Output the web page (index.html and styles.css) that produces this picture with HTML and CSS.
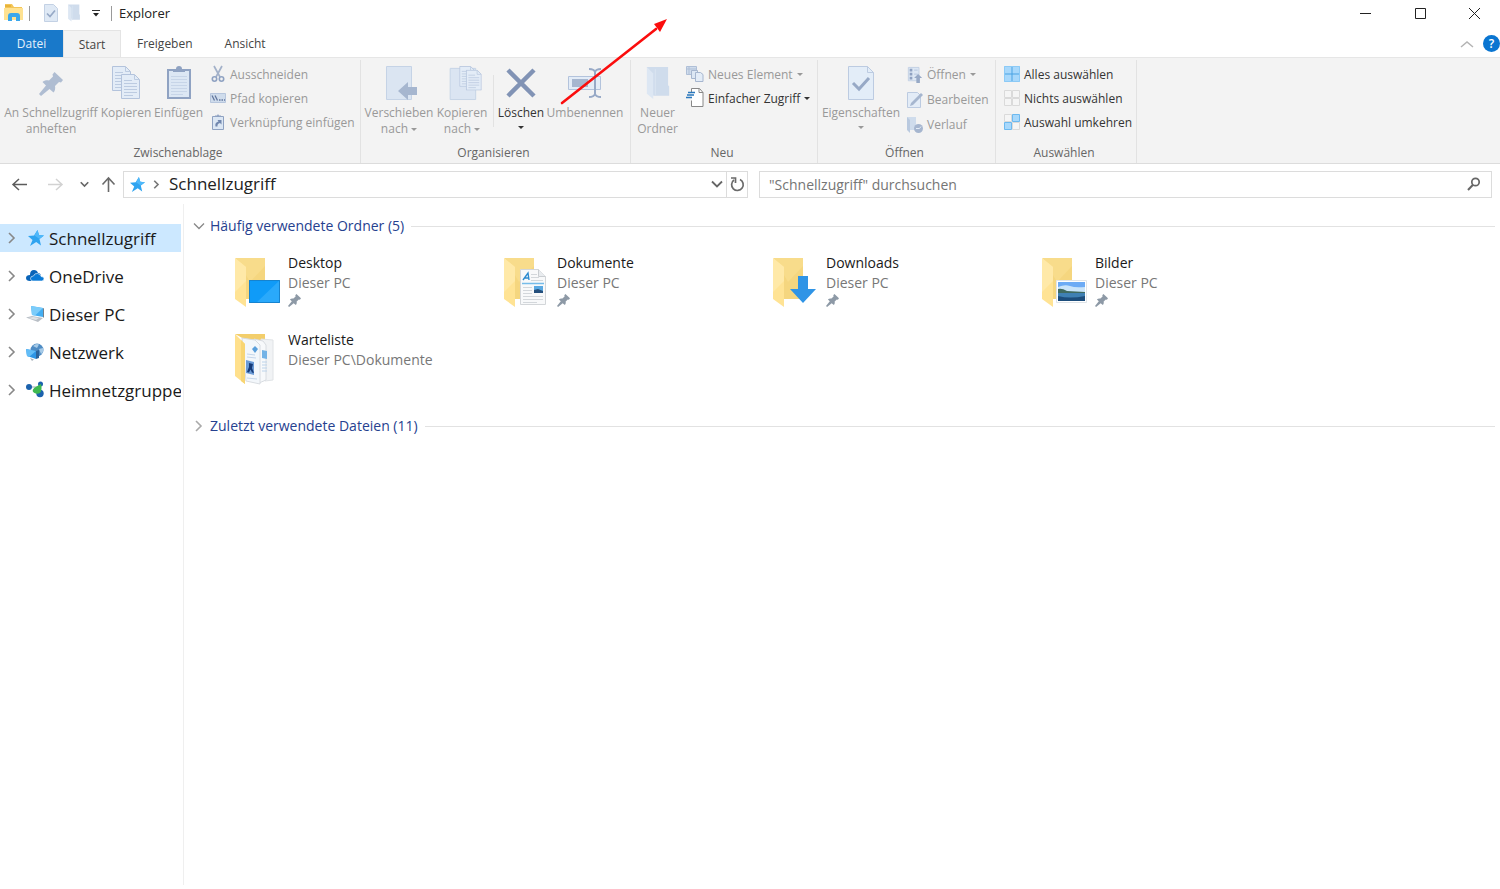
FILE: index.html
```html
<!DOCTYPE html>
<html lang="de">
<head>
<meta charset="utf-8">
<title>Explorer</title>
<link rel="stylesheet" href="styles.css">
</head>
<body>
<svg class="defs" aria-hidden="true">
  <symbol id="pin" viewBox="0 0 24 24"><path d="M15.500 0 24 8l-2 2.500-2-.5-4 4c.5 2.500 0 5-1.500 6.500L10.500 17 2 24l-2-2 7-8.500L3.500 10c1.500-1.500 4-2 6.500-1.500l4-4-.5-2z"/></symbol>
  <symbol id="chev" viewBox="0 0 12 12"><path d="M3 1l5 5-5 5" fill="none" stroke="currentColor" stroke-width="1.600"/></symbol>
  <symbol id="down" viewBox="0 0 12 12"><path d="M1 3.500l5 5 5-5" fill="none" stroke="currentColor" stroke-width="1.300"/></symbol>
  <symbol id="caret" viewBox="0 0 6 3"><path d="M0 0h6L3 3z" fill="currentColor"/></symbol>
  <symbol id="page" viewBox="0 0 19 25"><path d="M.5.500h13l5 5v19H.5z" fill="#e3ecf7" stroke="#b3c3dc"/><path d="M13.500.500v5h5M3 9.500h13M3 12.500h13M3 15.500h13M3 18.500h13M3 6.500h8M3 21.500h9" fill="none" stroke="#bccbe1"/></symbol>
  <symbol id="star" viewBox="0 0 16 16"><path d="M9.500 0l1.500 5 5 .5-4.500 3.500 1.500 6.500-4.800-3.500L2 16l2.500-6L0 6l6-.5z" fill="#2fa4f0"/><path d="M9.500 0l1.500 5 5 .5-4.500 3.500-5-3.500z" fill="#4fb8fa"/></symbol>
  <symbol id="folder" viewBox="0 0 46 52">
    <path d="M2 2h29v41H12z" fill="#f5d67f"/><path d="M2 2h29v8L16 26z" fill="#f8dc8b"/>
    <path d="M1 2l11 9v40L1 43z" fill="#ffe394"/><path d="M1 2l11 9v14L1 36z" fill="#ffe9a8"/>
  </symbol>
  <symbol id="flatfolder" viewBox="0 0 23 32"><path d="M1 1h20v17l1 1v9H7z" fill="#cfdcec"/><path d="M1 1l6 6v24l-6-5z" fill="#dde7f3"/><path d="M9 3v24" stroke="#dae4f1"/></symbol>
</svg>

<header class="titlebar">
  <svg class="app" viewBox="0 0 20 18"><path d="M1 0h7l2 3h8v3H1z" fill="#f3c558"/><path d="M0 4h19v12H0z" fill="#ffe291"/><path d="M1 1h6v2H1z" fill="#e8b43a"/><path d="M4 17v-5q0-3 3-3h6q3 0 3 3v5h-4v-4H8v4z" fill="#3aa7ec"/></svg>
  <span class="sep"></span>
  <button class="quick check" aria-label="Eigenschaften"><svg viewBox="0 0 14 18"><path d="M.5.500h9l4 4v13H.5z" fill="#dfe9f5" stroke="#c3d1e4"/><path d="M3 9.500l3 3 5-6" fill="none" stroke="#97a9c6" stroke-width="1.700"/></svg></button>
  <button class="quick fold" aria-label="Neuer Ordner"><svg viewBox="0 0 23 32"><use href="#flatfolder"/></svg></button>
  <button class="quick more" aria-label="Anpassen"><svg viewBox="0 0 8 7"><path d="M0 .5h8" stroke="#333"/><path d="M1 3h6L4 6.500z" fill="#222"/></svg></button>
  <span class="sep"></span>
  <h1>Explorer</h1>
  <div class="winbtns">
    <button aria-label="Minimieren"><svg viewBox="0 0 13 13"><path d="M1 6.500h11" stroke="#222"/></svg></button>
    <button aria-label="Maximieren"><svg viewBox="0 0 13 13"><path d="M1.500 1.500h10v10h-10z" fill="none" stroke="#222"/></svg></button>
    <button aria-label="Schließen"><svg viewBox="0 0 13 13"><path d="M1 1l11 11M12 1L1 12" stroke="#222"/></svg></button>
  </div>
</header>

<nav class="tabs">
  <button class="tab file">Datei</button>
  <button class="tab active">Start</button>
  <button class="tab">Freigeben</button>
  <button class="tab">Ansicht</button>
  <div class="tabend">
    <button class="collapse" aria-label="Menüband minimieren"><svg viewBox="0 0 14 8"><path d="M1 7l6-5 6 5" fill="none" stroke="#b4b4b4" stroke-width="1.500"/></svg></button>
    <button class="help" aria-label="Hilfe">?</button>
  </div>
</nav>

<section class="ribbon">
  <div class="group clip">
    <div class="tools">
      <button class="big off wide"><svg class="i24" viewBox="0 0 24 24" fill="#afbdd2"><use href="#pin"/></svg><span>An Schnellzugriff anheften</span></button>
      <button class="big off"><svg class="i34" viewBox="0 0 34 34"><svg x="3" y="0" width="19" height="25"><use href="#page"/></svg><svg x="12" y="8" width="19" height="25"><use href="#page"/></svg></svg><span>Kopieren</span></button>
      <button class="big off"><svg class="i34" viewBox="0 0 34 34"><path d="M6 4h22v28H6z" fill="#dce7f4" stroke="#8fa2c2" stroke-width="2"/><path d="M11 6V3h3q0-3 3-3t3 3h3v3z" fill="#8fa2c2"/><path d="M9 10.500h16M9 13.500h16M9 16.500h16M9 19.500h16M9 22.500h16M9 25.500h16M9 28.500h12" stroke="#c7d5e8"/></svg><span>Einfügen</span></button>
      <div class="stack">
        <button class="small off"><svg viewBox="0 0 16 16"><path d="M4 0l6 11M12 0L6 11" stroke="#a3b1c9" stroke-width="1.700"/><circle cx="4.500" cy="13" r="2.200" fill="none" stroke="#8fa2c2" stroke-width="1.600"/><circle cx="11.500" cy="13" r="2.200" fill="none" stroke="#8fa2c2" stroke-width="1.600"/></svg><span>Ausschneiden</span></button>
        <button class="small off"><svg viewBox="0 0 16 16"><path d="M.5 3.500h15v9H.5z" fill="#cfdcec" stroke="#b7c6dd"/><path d="M2 5.500l2.500 5M5 5.500l2.500 5" stroke="#61769d" stroke-width="1.300"/><path d="M9 10h1.500M11.500 10H13M14 10h1" stroke="#61769d" stroke-width="1.300"/></svg><span>Pfad kopieren</span></button>
        <button class="small off"><svg viewBox="0 0 16 16"><path d="M2.500 2.500h11v13h-11z" fill="#dce7f4" stroke="#8fa2c2"/><path d="M5 3V1.500h2L8 0l1 1.500h2V3z" fill="#8fa2c2"/><path d="M5.500 12.500q-1-4 3-5L7.500 6h4v4.500l-1.500-1.500q-3 .5-2.500 3.500z" fill="#7187ae"/></svg><span>Verknüpfung einfügen</span></button>
      </div>
    </div>
    <h2>Zwischenablage</h2>
  </div>

  <div class="group org">
    <div class="tools">
      <button class="big off"><svg class="i34" viewBox="0 0 34 34"><path d="M4.500.500h25v33h-25z" fill="#dbe5f2" stroke="#c5d3e6"/><path d="M16 25l10-9v5h9v8h-9v5z" fill="#a6b6cf"/></svg><span>Verschieben nach <svg class="caret"><use href="#caret"/></svg></span></button>
      <button class="big off"><svg class="i34" viewBox="0 0 34 36"><path d="M4.500 2.500h27v33h-27z" fill="#dbe5f2" stroke="#c5d3e6"/><svg x="14" y="0" width="17" height="22" viewBox="0 0 19 25"><use href="#page"/></svg><svg x="21" y="4" width="17" height="22" viewBox="0 0 19 25"><use href="#page"/></svg></svg><span>Kopieren nach <svg class="caret"><use href="#caret"/></svg></span></button>
      <span class="divider"></span>
      <button class="big"><svg class="i34" viewBox="0 0 34 34"><path d="M4 4l26 26M30 4L4 30" stroke="#8193b5" stroke-width="4.500"/></svg><span>Löschen</span><svg class="caret solo"><use href="#caret"/></svg></button>
      <button class="big off"><svg class="i34" viewBox="0 0 34 34"><path d="M.5 10.500h32v13H.5z" fill="#e3ecf7" stroke="#b3c3dc"/><path d="M4 13h16v8H4z" fill="#a6b6cf"/><path d="M21 3q5 0 6 3 1-3 6-3M27 6v22M21 31q5 0 6-3 1 3 6 3" fill="none" stroke="#97a9c6" stroke-width="2"/></svg><span>Umbenennen</span></button>
    </div>
    <h2>Organisieren</h2>
  </div>

  <div class="group new">
    <div class="tools">
      <button class="big off"><svg class="i34" viewBox="0 0 23 32"><use href="#flatfolder"/></svg><span>Neuer Ordner</span></button>
      <div class="stack">
        <button class="small off"><svg class="w18" viewBox="0 0 18 16"><path d="M.5.500h10v8H.5z" fill="#cfdcec" stroke="#afbfd7"/><path d="M3 0v9M0 3h11" stroke="#afbfd7"/><path d="M5.500 4.500h6v8h-6z" fill="#dce7f4" stroke="#a6b6cf"/><path d="M9.500 6.500h5l2.500 2v7H9.500z" fill="#e3ecf7" stroke="#a6b6cf"/></svg><span>Neues Element</span><svg class="caret"><use href="#caret"/></svg></button>
        <button class="small"><svg class="w18 tall" viewBox="0 0 18 20"><path d="M5.500 4.500v-4h8l3.500 4v14H5.500v-6" fill="#fff" stroke="#888"/><path d="M13 .500v4h4" fill="none" stroke="#888"/><path d="M2 4.500h7M1 7h7M0 9.500h6" stroke="#2b78bd" stroke-width="1.500"/></svg><span>Einfacher Zugriff</span><svg class="caret"><use href="#caret"/></svg></button>
      </div>
    </div>
    <h2>Neu</h2>
  </div>

  <div class="group open">
    <div class="tools">
      <button class="big off"><svg class="i34" viewBox="0 0 34 34"><path d="M4.500.500h19l6 6v27h-25z" fill="#e3edf8" stroke="#bccbe1"/><path d="M23.500.500v6h6" fill="none" stroke="#bccbe1"/><path d="M9 17l6 6 10-11" fill="none" stroke="#97a9c6" stroke-width="3"/></svg><span>Eigenschaften</span><svg class="caret solo"><use href="#caret"/></svg></button>
      <div class="stack">
        <button class="small off"><svg viewBox="0 0 16 18"><path d="M.5.500h12v15H.5z" fill="#dce7f4" stroke="#c1cfe3"/><path d="M2 2h3v3H2zM2 6.500h3v3H2zM2 11h3v3H2z" fill="#8fa2c2"/><path d="M7 3.500h4M7 8h4" stroke="#b3c3dc"/><path d="M11.500 8l4.500 4.500h-2.500V18h-4v-5.500H7z" fill="#97a9c6"/></svg><span>Öffnen</span><svg class="caret"><use href="#caret"/></svg></button>
        <button class="small off"><svg viewBox="0 0 16 16"><path d="M.5.500h10l3 3v12H.5z" fill="#e3ecf7" stroke="#bccbe1"/><path d="M3 14l1-3 10-10 2 2L6 13z" fill="#a6b6cf"/></svg><span>Bearbeiten</span></button>
        <button class="small off"><svg viewBox="0 0 16 16"><path d="M0 0h9v13H3z" fill="#cfdcec"/><path d="M0 0l3 3v13l-3-3z" fill="#b9c9df"/><circle cx="11.500" cy="11.500" r="4.500" fill="#a6b6cf"/><path d="M9 11.500h3.500l1.500-2" fill="none" stroke="#e3ecf7"/></svg><span>Verlauf</span></button>
      </div>
    </div>
    <h2>Öffnen</h2>
  </div>

  <div class="group select">
    <div class="tools">
      <div class="stack">
        <button class="small"><svg viewBox="0 0 16 16"><path d="M0 0h16v16H0z" fill="#a8d8fb"/><path d="M8 0v16M0 8h16" stroke="#4ba3e3"/><path d="M.5.500h15v15H.5z" fill="none" stroke="#8ccaf6"/></svg><span>Alles auswählen</span></button>
        <button class="small"><svg viewBox="0 0 16 16"><path d="M.5.500h7v7h-7zM8.500.500h7v7h-7zM.5 8.500h7v7h-7zM8.500 8.500h7v7h-7z" fill="#f5f5f5" stroke="#dadada"/></svg><span>Nichts auswählen</span></button>
        <button class="small"><svg viewBox="0 0 16 16"><path d="M.5.500h7v7h-7zM8.500 8.500h7v7h-7z" fill="#f5f5f5" stroke="#dadada"/><path d="M8.500.500h7v7h-7zM.5 8.500h7v7h-7z" fill="#a8d8fb" stroke="#6cb9ef"/></svg><span>Auswahl umkehren</span></button>
      </div>
    </div>
    <h2>Auswählen</h2>
  </div>
</section>

<div class="navbar">
  <div class="arrows">
    <button aria-label="Zurück"><svg class="a15" viewBox="0 0 15 14"><path d="M15 7H1M7 1.500L1 7l6 5.500" fill="none" stroke="#5c5c5c" stroke-width="1.500"/></svg></button>
    <button class="fwd" aria-label="Vorwärts" disabled><svg class="a15" viewBox="0 0 15 14"><path d="M0 7h14M8 1.500L14 7l-6 5.500" fill="none" stroke="#d2d2d2" stroke-width="1.500"/></svg></button>
    <button class="hist" aria-label="Verlauf"><svg class="a8" viewBox="0 0 12 12"><path d="M1 3l5 5 5-5" fill="none" stroke="#666" stroke-width="2.200"/></svg></button>
    <button class="up" aria-label="Nach oben"><svg class="a15" viewBox="0 0 15 15"><path d="M7.500 15V1M1.500 7.500l6-6.500 6 6.500" fill="none" stroke="#6a6a6a" stroke-width="1.600"/></svg></button>
  </div>
  <div class="address">
    <svg class="a15" viewBox="0 0 16 16"><use href="#star"/></svg>
    <svg class="a8 grey" viewBox="0 0 12 12"><path d="M3 1l5 5-5 5" fill="none" stroke="currentColor" stroke-width="2.200"/></svg>
    <span>Schnellzugriff</span>
    <button class="drop" aria-label="Vorherige Orte"><svg viewBox="0 0 12 12"><path d="M1 3.500l5 5 5-5" fill="none" stroke="#666" stroke-width="1.800"/></svg></button>
    <button class="reload" aria-label="Aktualisieren"><svg viewBox="0 0 15 16"><path d="M10 3.500A5.800 5.800 0 1 1 4 4" fill="none" stroke="#6a6a6a" stroke-width="1.700"/><path d="M1 2h4.500v5" fill="none" stroke="#6a6a6a" stroke-width="1.700"/></svg></button>
  </div>
  <label class="search">
    <input type="text" placeholder="&quot;Schnellzugriff&quot; durchsuchen" aria-label="Durchsuchen">
    <svg viewBox="0 0 14 14"><circle cx="8.500" cy="5" r="3.700" fill="none" stroke="#666" stroke-width="1.700"/><path d="M6 7.800L1 13" stroke="#666" stroke-width="2"/></svg>
  </label>
</div>

<div class="body">
  <aside class="tree">
    <a class="node on" href="#"><svg class="tw"><use href="#chev"/></svg><svg class="ic" viewBox="0 0 18 18"><svg x="2" y="1" width="16" height="16"><use href="#star"/></svg></svg><span>Schnellzugriff</span></a>
    <a class="node" href="#"><svg class="tw"><use href="#chev"/></svg><svg class="ic" viewBox="0 0 18 18"><path d="M4 14q-4 0-4-3t4-3q0-5 4-5 3 0 4 3 3 0 3 4v4z" fill="#0a64b8"/><path d="M7 14q-2.500 0-2.500-2.500T7.500 9q1-3 4-2.500T15 9.500q3 0 3 2.300T15.500 14z" fill="#0a7ad6" stroke="#fff" stroke-width=".6"/></svg><span>OneDrive</span></a>
    <a class="node" href="#"><svg class="tw"><use href="#chev"/></svg><svg class="ic" viewBox="0 0 18 18"><path d="M5 1l12 2v9L6 10z" fill="#44aef2"/><path d="M5 1l12 2-8 7.500L6 10z" fill="#7bccfa"/><path d="M17 3l1 .5V13l-1-1z" fill="#72808c"/><path d="M0 12.500L6 11l11 2-5 4z" fill="#b9bfc6"/><path d="M2 13l5-1 6 1-3 2z" fill="#dfe3e6"/></svg><span>Dieser PC</span></a>
    <a class="node" href="#"><svg class="tw"><use href="#chev"/></svg><svg class="ic" viewBox="0 0 18 18"><circle cx="11" cy="7" r="6.500" fill="#4f8cc4"/><path d="M7 3q3-3 6-1.500L11 5zM13 6l4-1q1 4-2 6z" fill="#a7cbe8"/><path d="M0 6l10 2v8L1 13z" fill="#2d95e5"/><path d="M0 6l10 2-7 6-2-1z" fill="#63bdf7"/><path d="M10 8l3-1v8l-3 1z" fill="#2a639c"/><path d="M4 15l4 1.500L6 18z" fill="#aab4bd"/></svg><span>Netzwerk</span></a>
    <a class="node" href="#"><svg class="tw"><use href="#chev"/></svg><svg class="ic" viewBox="0 0 18 18"><path d="M3 6h8M11 8l3-5M11 8l3 6" stroke="#98a6b2"/><circle cx="3" cy="6" r="3" fill="#1c62ad"/><circle cx="14.500" cy="3" r="2.500" fill="#1c62ad"/><circle cx="14" cy="12.500" r="3.700" fill="#1c62ad"/><path d="M7 8.500q1-2 3.500-3L15 3q1.500 6-1 9-3 1.500-5.500 0T7 8.500z" fill="#3fb950"/></svg><span>Heimnetzgruppe</span></a>
  </aside>

  <main class="content">
    <h3><svg class="tw"><use href="#down"/></svg><span>Häufig verwendete Ordner (5)</span></h3>
    <div class="tiles">
      <a class="tile" href="#"><svg class="pic" viewBox="0 0 46 52"><use href="#folder"/><path d="M15 24h31v23H15z" fill="#0f9bf8"/><path d="M46 24v23H22z" fill="#2aa9fb"/><path d="M15.500 24.500h30v22h-30z" fill="none" stroke="#1683cf"/></svg><span class="txt"><b>Desktop</b><span>Dieser PC</span><svg class="pinned" viewBox="0 0 24 24"><use href="#pin"/></svg></span></a>
      <a class="tile" href="#"><svg class="pic" viewBox="0 0 46 52"><use href="#folder"/><path d="M17.500 13.500h18l7 7v28h-25z" fill="#f8f9fa" stroke="#d3d6d9"/><path d="M35.500 13.500v7h7" fill="#e9ecef" stroke="#c9cdd1"/><path d="M19 27.500h22" stroke="#76bce9" stroke-width="1.500"/><path d="M20 24l5-7 1 7M21.500 22h4" fill="none" stroke="#2d8bd0" stroke-width="1.400"/><path d="M28 18.500h6M28 21.500h8M28 24.500h12M20 31.500h9M20 34.500h9M20 37.500h9M20 40.500h20M20 43.500h20M20 46.500h14" stroke="#d3d7db"/><path d="M31 30h9v7h-9z" fill="#5aa9e2"/><path d="M31 34l4-1 5 2v2h-9z" fill="#244f7c"/></svg><span class="txt"><b>Dokumente</b><span>Dieser PC</span><svg class="pinned" viewBox="0 0 24 24"><use href="#pin"/></svg></span></a>
      <a class="tile" href="#"><svg class="pic" viewBox="0 0 46 52"><use href="#folder"/><path d="M26 20h10v13h8L31 47 18 33h8z" fill="#2f94e6"/></svg><span class="txt"><b>Downloads</b><span>Dieser PC</span><svg class="pinned" viewBox="0 0 24 24"><use href="#pin"/></svg></span></a>
      <a class="tile" href="#"><svg class="pic" viewBox="0 0 46 52"><use href="#folder"/><path d="M15.500 24.500h30v22h-30z" fill="#fff" stroke="#dfe4e8"/><path d="M17 26h27v10H17z" fill="#6cabf5"/><path d="M17 31q7-3 12-1t15 1v6H17z" fill="#c9e4fa"/><path d="M17 33q4-1 9 2l18 1v2H17z" fill="#3f6a60"/><path d="M17 37h27v8H17z" fill="#3f80b3"/><path d="M17 40q12 3 27 0v5H17z" fill="#1d4d7c"/></svg><span class="txt"><b>Bilder</b><span>Dieser PC</span><svg class="pinned" viewBox="0 0 24 24"><use href="#pin"/></svg></span></a>
      <a class="tile" href="#"><svg class="pic" viewBox="0 0 46 52"><path d="M1 1h30v6H12z" fill="#f3ce6b"/><path d="M27 6l12 1v40l-8 1z" fill="#f1f3f5" stroke="#e0e3e6"/><path d="M20 6l9 2 3 4v35l-7 3z" fill="#f7f9fb" stroke="#d8dce1"/><path d="M8 5l13 2 5 5v39l-14-3z" fill="#f3f7fb" stroke="#d8dce1"/><path d="M28 17l5 1v8l-5-1z" fill="#74b3e6"/><path d="M28 29h5M28 32h5M28 35h5M28 38h5" stroke="#bcd3ea"/><path d="M21 13l3 3-3 4-3-4z" fill="#5a9fdb"/><path d="M12 27l8 2v13l-8-2z" fill="#6b9bd6"/><path d="M15 30l4 1-1 4 2 5-2-.5-1.500-3-1.500 3-2-.5 2-5z" fill="#163a78"/><path d="M13 21l8 1M13 24l9 1M13 45l10 1" stroke="#c4d6ea"/><path d="M1 1l10 10v40L1 43z" fill="#ffe08c"/><path d="M7 7l4 4v40l-4-3z" fill="#f8d573"/></svg><span class="txt"><b>Warteliste</b><span>Dieser PC\Dokumente</span></span></a>
    </div>
    <h3><svg class="tw pale"><use href="#chev"/></svg><span>Zuletzt verwendete Dateien (11)</span></h3>
  </main>
</div>

<svg class="pointer" viewBox="0 0 108 88" aria-hidden="true"><path d="M2 85L96 11" stroke="#fb0d0d" stroke-width="2.600" stroke-linecap="round"/><path d="M107 1L94 6l6 8z" fill="#fb0d0d"/></svg>
</body>
</html>
```
FILE: styles.css
```css
* { box-sizing: border-box; }
body {
  margin: 0;
  min-height: 100vh;
  display: flex;
  flex-direction: column;
  position: relative;
  background: #fff;
  color: #222;
  font-family: "Open Sans", "Noto Sans", sans-serif;
  font-size: 12px;
}
button { border: 0; margin: 0; padding: 0; background: none; color: inherit; font: inherit; }
a { color: inherit; text-decoration: none; }
h1, h2, h3 { margin: 0; font-weight: 400; }
svg { display: block; flex: none; overflow: visible; }
.defs { display: none; }

.titlebar { display: flex; align-items: center; height: 30px; padding: 0 0 4px 4px; }
.titlebar .app { width: 20px; height: 18px; }
.titlebar .sep { width: 1px; height: 15px; margin-left: 5px; background: #9a9a9a; }
.quick svg { width: 14px; height: 18px; }
.quick.check { margin-left: 14px; }
.quick.fold { margin-left: 9px; }
.quick.more { margin-left: 11px; }
.quick.more svg { width: 8px; height: 7px; }
.quick.more + .sep { margin-left: 11px; }
.titlebar h1 { margin-left: 7px; font-size: 13px; }
.winbtns { display: flex; margin-left: auto; }
.winbtns button { width: 55px; display: flex; justify-content: center; }
.winbtns button:last-child { width: 52px; }
.winbtns svg { width: 13px; height: 13px; }

.tabs { display: flex; height: 27px; }
.tab { padding: 0 16px; color: #444; }
.tab.file { width: 63px; background: #1979ca; color: #e4f0fa; }
.tab.active { width: 58px; padding: 0; border: 1px solid #e4e4e4; border-bottom: 0; background: #f3f3f3; }
.tabend { display: flex; align-items: center; gap: 9px; margin-left: auto; }
.collapse svg { width: 14px; height: 8px; }
.help { width: 17px; height: 17px; border-radius: 50%; background: #0a75d1; color: #fff; font-weight: 600; line-height: 17px; }

.ribbon { display: flex; height: 107px; padding-top: 2px; background: #f3f3f3; border-top: 1px solid #e6e6e6; border-bottom: 1px solid #dcdcdc; }
.group { display: flex; flex-direction: column; justify-content: space-between; border-right: 1px solid #e2e2e2; }
.group h2 { font-size: 12px; line-height: 20px; text-align: center; color: #666; padding-right: 4px; }
.tools { display: flex; padding-top: 2px; }
.big { display: flex; flex-direction: column; align-items: center; padding-top: 4px; line-height: 16px; color: #333; }
.big > span { margin-top: 5px; }
.big.wide { width: 102px; }
.i34 { width: 34px; height: 34px; }
.i24 { width: 24px; height: 24px; margin: 6px 0 4px; }
.off { color: #999; }
.caret { display: inline-block; width: 6px; height: 3px; vertical-align: middle; }
.caret.solo { margin-top: 5px; }
.small { display: flex; align-items: center; gap: 4px; height: 24px; color: #333; }
.small.off { color: #999; }
.small svg:first-child { width: 16px; height: 16px; }
.small svg.w18:first-child { width: 18px; }
.small svg.tall:first-child { height: 20px; }
.open .small { height: 25px; }

.clip { width: 361px; }
.clip .big:nth-child(2) { width: 48px; }
.clip .big:nth-child(3) { width: 57px; }
.clip .stack { margin-left: 3px; }
.org { width: 270px; }
.org .big:nth-child(1) { width: 76px; }
.org .big:nth-child(2) { width: 50px; }
.org .big:nth-child(4) { width: 54px; }
.org .big:nth-child(5) { width: 74px; }
.divider { width: 1px; height: 52px; margin: 13px 0 0 6px; background: #e2e2e2; }
.new { width: 187px; }
.new .big { width: 53px; }
.new .stack { margin-left: 2px; }
.open { width: 178px; }
.open .big { width: 86px; }
.open .stack { margin-left: 3px; }
.select { width: 141px; }
.select .stack { margin-left: 8px; }

.navbar { display: flex; align-items: center; height: 40px; padding-right: 8px; }
.arrows { display: flex; align-items: center; width: 123px; padding-left: 12px; }
.arrows .fwd { margin-left: 21px; }
.arrows .hist { margin-left: 17px; }
.arrows .up { margin-left: 12px; }
.a15 { width: 15px; height: 15px; }
.a8 { width: 9px; height: 9px; }
.grey { color: #777; }
.address { flex: 617 1 0; display: flex; align-items: center; height: 27px; padding-left: 6px; border: 1px solid #dcdcdc; }
.address > .grey { margin: 0 8px 0 7px; }
.address > span { flex: 1; font-size: 17px; line-height: 24px; color: #222; }
.drop svg { width: 12px; height: 12px; margin-right: 3px; }
.reload { align-self: stretch; width: 21px; border-left: 1px solid #dcdcdc; display: grid; place-items: center; }
.reload svg { width: 15px; height: 16px; }
.search { flex: 712 1 0; display: flex; align-items: center; height: 27px; margin-left: 11px; padding: 0 10px 0 9px; border: 1px solid #dcdcdc; }
.search input { flex: 1; min-width: 0; border: 0; padding: 0; outline: 0; background: none; font: inherit; font-size: 14px; color: #222; }
.search input::placeholder { color: #757575; opacity: 1; }
.search svg { width: 14px; height: 14px; }

.body { flex: 1; display: flex; margin-bottom: 4px; }
.tree { width: 184px; padding: 20px 2px 0 0; border-right: 1px solid #efefef; display: flex; flex-direction: column; gap: 10px; overflow: hidden; }
.node { display: flex; align-items: center; height: 28px; padding-left: 6px; overflow: hidden; font-size: 17px; white-space: nowrap; color: #1a1a1a; }
.node.on { background: #cce8ff; }
.tw { width: 12px; height: 12px; color: #888; }
.node .ic { width: 18px; height: 18px; margin: 0 5px 0 8px; }
.content { flex: 1; min-width: 0; padding: 12px 5px 0 9px; }
.content h3 { display: flex; align-items: center; gap: 5px; font-size: 14px; line-height: 20px; color: #26418f; }
.content h3::after { content: ""; flex: 1; height: 1px; margin-left: 2px; background: #e2e2e2; }
.content h3 .pale { color: #aaa; }
.tiles { display: grid; grid-template-columns: repeat(auto-fill, 269px); grid-auto-rows: 77px; padding: 17px 0 9px 41px; }
.tile { display: flex; align-items: flex-start; gap: 8px; }
.pic { width: 46px; height: 52px; margin-top: 3px; }
.txt { display: flex; flex-direction: column; font-size: 14px; line-height: 20px; color: #777; }
.txt b { font-weight: 400; color: #1a1a1a; }
.pinned { width: 13px; height: 13px; margin-top: 1px; fill: #8d99a6; }

.pointer { position: absolute; left: 560px; top: 18px; width: 108px; height: 88px; pointer-events: none; }
```
